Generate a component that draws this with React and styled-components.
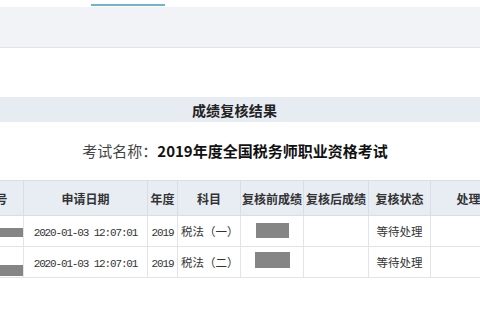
import React from "react";
import styled, { createGlobalStyle } from "styled-components";

const GlobalStyle = createGlobalStyle`
  html, body {
    margin: 0;
    padding: 0;
    background: #ffffff;
  }
  body {
    font-family: "Noto Sans CJK SC", "Noto Sans", sans-serif;
    color: #333;
  }
`;

const columns = [
  { key: "no", title: "准考证号", width: 80 },
  { key: "date", title: "申请日期", width: 124 },
  { key: "year", title: "年度", width: 30 },
  { key: "subject", title: "科目", width: 63 },
  { key: "before", title: "复核前成绩", width: 63 },
  { key: "after", title: "复核后成绩", width: 65 },
  { key: "status", title: "复核状态", width: 62 },
  { key: "result", title: "处理意见", width: 100 },
];

const tableWidth = columns.reduce((sum, c) => sum + c.width, 0);

const rows = [
  {
    id: 1,
    date: "2020-01-03 12:07:01",
    year: "2019",
    subject: "税法（一）",
    status: "等待处理",
    noMask: { w: 76, h: 9, dy: 1 },
    scoreMask: { w: 33, h: 15, dy: -1 },
  },
  {
    id: 2,
    date: "2020-01-03 12:07:01",
    year: "2019",
    subject: "税法（二）",
    status: "等待处理",
    noMask: { w: 76, h: 11, dy: 8 },
    scoreMask: { w: 35, h: 16, dy: -2 },
  },
];

const Page = styled.div`
  width: 480px;
  height: 320px;
  overflow: hidden;
  background: #fff;
`;

const TopStrip = styled.div`
  height: 7px;
  background: #fff;
  display: flex;
  align-items: flex-start;
  padding-left: 91px;
`;

const TabMark = styled.div`
  margin-top: 4px;
  width: 74px;
  height: 2px;
  background: #72b4cf;
`;

const NavBar = styled.div`
  height: 40px;
  background: #f2f3f6;
  border-bottom: 1px solid #e2e4e8;
`;

const Gap = styled.div`
  height: ${(p) => p.h}px;
`;

const SectionBar = styled.div`
  height: 25px;
  background: #e7ebf2;
  display: flex;
  align-items: center;
  justify-content: center;
  padding-right: 11px;
  font-size: 14px;
  font-weight: 700;
  color: #222;
  letter-spacing: 0.2px;
`;

const ExamLine = styled.div`
  height: 58px;
  display: flex;
  align-items: center;
  justify-content: center;
  padding-right: 10px;
  font-size: 15px;
  color: #444;
  padding-bottom: 2px;
  box-sizing: border-box;
`;

const ExamName = styled.span`
  font-weight: 700;
  color: #111;
`;

const TableWrap = styled.div`
  margin-left: -57px;
  width: ${tableWidth}px;
`;

const Table = styled.table`
  width: ${tableWidth}px;
  border-collapse: collapse;
  table-layout: fixed;
`;

const HeadCell = styled.th`
  height: 34px;
  padding: 0;
  background: #e8edf3;
  border: 1px solid #d9dee5;
  font-size: 12px;
  font-weight: 700;
  color: #333;
  text-align: center;
  white-space: nowrap;
  overflow: hidden;
`;

const Cell = styled.td`
  height: 31px;
  padding: 0 3px;
  border: 1px solid #e1e5ea;
  font-size: 11.5px;
  color: #333;
  text-align: ${(p) => p.align || "center"};
  white-space: nowrap;
  overflow: hidden;
  box-sizing: border-box;
`;

const Mono = styled.span`
  font-family: "Liberation Mono", "DejaVu Sans Mono", monospace;
  font-size: 11px;
  letter-spacing: -1.15px;
  color: #333;
`;

const Mask = styled.div`
  display: block;
  margin: 0 auto;
  background: #858585;
`;

export default function App() {
  return (
    <Page>
      <GlobalStyle />
      <TopStrip>
        <TabMark />
      </TopStrip>
      <NavBar />
      <Gap h={49} />
      <SectionBar>成绩复核结果</SectionBar>
      <ExamLine>
        考试名称：<ExamName>2019年度全国税务师职业资格考试</ExamName>
      </ExamLine>
      <TableWrap>
        <Table>
          <colgroup>
            {columns.map((c) => (
              <col key={c.key} style={{ width: c.width }} />
            ))}
          </colgroup>
          <thead>
            <tr>
              {columns.map((c) => (
                <HeadCell key={c.key}>{c.title}</HeadCell>
              ))}
            </tr>
          </thead>
          <tbody>
            {rows.map((r) => (
              <tr key={r.id}>
                <Cell>
                  <Mask
                    style={{
                      width: r.noMask.w,
                      height: r.noMask.h,
                      transform: `translateY(${r.noMask.dy}px)`,
                    }}
                  />
                </Cell>
                <Cell>
                  <Mono>{r.date}</Mono>
                </Cell>
                <Cell>
                  <Mono>{r.year}</Mono>
                </Cell>
                <Cell align="left">{r.subject}</Cell>
                <Cell>
                  <Mask
                    style={{
                      width: r.scoreMask.w,
                      height: r.scoreMask.h,
                      transform: `translateY(${r.scoreMask.dy}px)`,
                    }}
                  />
                </Cell>
                <Cell />
                <Cell>{r.status}</Cell>
                <Cell />
              </tr>
            ))}
          </tbody>
        </Table>
      </TableWrap>
    </Page>
  );
}
